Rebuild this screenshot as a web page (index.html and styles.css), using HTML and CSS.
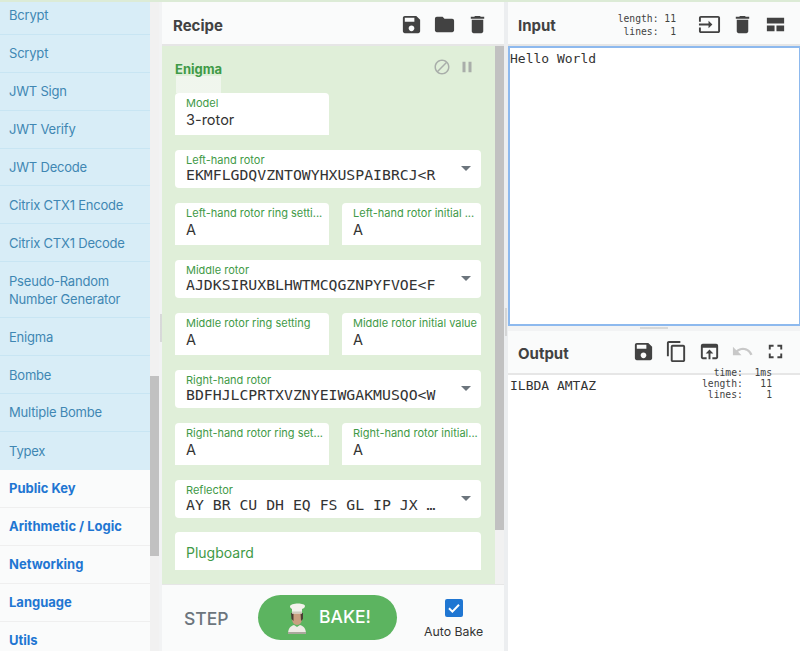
FILE: index.html
```html
<!DOCTYPE html>
<html lang="en">
<head>
<meta charset="utf-8">
<title>CyberChef</title>
<link rel="stylesheet" href="styles.css">
</head>
<body>
<div class="app">
  <aside class="ops">
    <ul class="op-list">
      <li class="op">Bcrypt</li>
      <li class="op">Scrypt</li>
      <li class="op">JWT Sign</li>
      <li class="op">JWT Verify</li>
      <li class="op">JWT Decode</li>
      <li class="op">Citrix CTX1 Encode</li>
      <li class="op">Citrix CTX1 Decode</li>
      <li class="op op-tall">Pseudo-Random Number Generator</li>
      <li class="op">Enigma</li>
      <li class="op">Bombe</li>
      <li class="op">Multiple Bombe</li>
      <li class="op op-last">Typex</li>
      <li class="cat">Public Key</li>
      <li class="cat">Arithmetic / Logic</li>
      <li class="cat">Networking</li>
      <li class="cat">Language</li>
      <li class="cat">Utils</li>
    </ul>
    <div class="scroll-track"><div class="scroll-thumb thumb-ops"></div></div>
  </aside>
  <div class="gutter-v"><span class="grip grip-v grip-ops"></span></div>
  <section class="recipe">
    <header class="head">
      <h2 class="title">Recipe</h2>
      <div class="tools tools-recipe">
        <svg class="ic" viewBox="0 0 24 24"><path d="M17 3H5c-1.110 0-2 .9-2 2v14c0 1.100.89 2 2 2h14c1.100 0 2-.9 2-2V7l-4-4zm-5 16c-1.660 0-3-1.340-3-3s1.340-3 3-3 3 1.340 3 3-1.340 3-3 3zm3-10H5V5h10v4z"/></svg>
        <svg class="ic" viewBox="0 0 24 24"><path d="M10 4H4c-1.100 0-1.990.9-1.990 2L2 18c0 1.100.9 2 2 2h16c1.100 0 2-.9 2-2V8c0-1.100-.9-2-2-2h-8l-2-2z"/></svg>
        <svg class="ic" viewBox="0 0 24 24"><path d="M6 19c0 1.100.9 2 2 2h8c1.100 0 2-.9 2-2V7H6v12zM19 4h-3.500l-1-1h-5l-1 1H5v2h14V4z"/></svg>
      </div>
    </header>
    <div class="recipe-body">
      <div class="enigma">
        <div class="enigma-head">
          <div class="enigma-name">
            <h3 class="enigma-title">Enigma</h3>
            <span class="grip grip-name"></span>
          </div>
          <div class="enigma-tools">
            <svg class="ic-flow" viewBox="0 0 24 24"><path d="M12 2C6.480 2 2 6.480 2 12s4.480 10 10 10 10-4.480 10-10S17.520 2 12 2zM4 12c0-4.420 3.580-8 8-8 1.850 0 3.550.63 4.900 1.690L5.690 16.900C4.630 15.550 4 13.850 4 12zm8 8c-1.850 0-3.550-.63-4.900-1.690L18.310 7.100C19.370 8.450 20 10.150 20 12c0 4.420-3.580 8-8 8z"/></svg>
            <svg class="ic-flow" viewBox="0 0 24 24"><path d="M6 19h4V5H6v14zm8-14v14h4V5h-4z"/></svg>
          </div>
        </div>
        <div class="fields">
          <div class="row row-model">
            <div class="card card-text"><label class="lbl">Model</label><div class="val">3-rotor</div></div>
          </div>
          <div class="card card-sel"><label class="lbl">Left-hand rotor</label><div class="val mono">EKMFLGDQVZNTOWYHXUSPAIBRCJ&lt;R</div><span class="caret"></span></div>
          <div class="row">
            <div class="card card-text"><label class="lbl">Left-hand rotor ring setti...</label><div class="val">A</div></div>
            <div class="card card-text"><label class="lbl">Left-hand rotor initial ...</label><div class="val">A</div></div>
          </div>
          <div class="card card-sel"><label class="lbl">Middle rotor</label><div class="val mono">AJDKSIRUXBLHWTMCQGZNPYFVOE&lt;F</div><span class="caret"></span></div>
          <div class="row">
            <div class="card card-text"><label class="lbl">Middle rotor ring setting</label><div class="val">A</div></div>
            <div class="card card-text"><label class="lbl">Middle rotor initial value</label><div class="val">A</div></div>
          </div>
          <div class="card card-sel"><label class="lbl">Right-hand rotor</label><div class="val mono">BDFHJLCPRTXVZNYEIWGAKMUSQO&lt;W</div><span class="caret"></span></div>
          <div class="row">
            <div class="card card-text"><label class="lbl">Right-hand rotor ring set...</label><div class="val">A</div></div>
            <div class="card card-text"><label class="lbl">Right-hand rotor initial...</label><div class="val">A</div></div>
          </div>
          <div class="card card-sel"><label class="lbl">Reflector</label><div class="val mono">AY BR CU DH EQ FS GL IP JX …</div><span class="caret"></span></div>
          <div class="card card-plug">Plugboard</div>
        </div>
      </div>
      <div class="scroll-track"><div class="scroll-thumb thumb-recipe"></div></div>
    </div>
    <footer class="controls">
      <span class="step">STEP</span>
      <button class="bake" type="button">
        <svg class="chef" viewBox="0 0 24 31">
          <path d="M3 31c0-5 2-8 6-9l3 2 3-2c4 1 6 4 6 9z" fill="#eeece6"/>
          <path d="M3 29h18v2H3z" fill="#a9a89c"/>
          <path d="M7 10h10v6c0 3-2 6-5 6s-5-3-5-6z" fill="#c99f80"/>
          <path d="M6 10h2.500v8l-2-2zM15.500 10H18v6l-2 2z" fill="#4a3d33"/>
          <path d="M5 3.500C5 1.500 9 .5 13 .5s7 1 7 2.500-1.500 2.500-3 3v4.500H7V6C6 5.500 5 4.800 5 3.500z" fill="#f3f2ec"/>
          <path d="M7 8.500h10V10.500H7z" fill="#cfccbf"/>
        </svg>
        <span class="bake-text">BAKE!</span>
      </button>
      <div class="auto">
        <span class="check"><svg viewBox="0 0 18 18"><path d="M4 9.300l3.400 3.300L14 5.800" fill="none" stroke="#fff" stroke-width="2"/></svg></span>
        <span class="auto-label">Auto Bake</span>
      </div>
    </footer>
  </section>
  <div class="gutter-v gutter-io"><span class="grip grip-v grip-io"></span></div>
  <section class="io">
    <div class="input">
      <header class="head">
        <h2 class="title">Input</h2>
        <div class="stats stats-in">length: 11
lines:  1</div>
        <div class="tools tools-in">
          <svg class="ic" viewBox="0 0 24 24"><path d="M21 3.010H3c-1.100 0-2 .9-2 2V9h2V4.990h18v14.030H3V15H1v4.010c0 1.100.9 1.980 2 1.980h18c1.100 0 2-.88 2-1.980v-14c0-1.110-.9-2-2-2zM11 16l4-4-4-4v3H1v2h10v3z"/></svg>
          <svg class="ic" viewBox="0 0 24 24"><path d="M6 19c0 1.100.9 2 2 2h8c1.100 0 2-.9 2-2V7H6v12zM19 4h-3.500l-1-1h-5l-1 1H5v2h14V4z"/></svg>
          <svg class="ic" viewBox="0 0 24 24"><path d="M3 5h18v6H3zM3 13h8v6H3zM13 13h8v6h-8z"/></svg>
        </div>
      </header>
      <div class="input-box">Hello World</div>
    </div>
    <div class="gutter-h"><span class="grip grip-h"></span></div>
    <div class="output">
      <header class="head head-out">
        <h2 class="title">Output</h2>
        <div class="tools tools-out">
          <svg class="ic" viewBox="0 0 24 24"><path d="M17 3H5c-1.110 0-2 .9-2 2v14c0 1.100.89 2 2 2h14c1.100 0 2-.9 2-2V7l-4-4zm-5 16c-1.660 0-3-1.340-3-3s1.340-3 3-3 3 1.340 3 3-1.340 3-3 3zm3-10H5V5h10v4z"/></svg>
          <svg class="ic" viewBox="0 0 24 24"><path d="M16 1H4c-1.100 0-2 .9-2 2v14h2V3h12V1zm3 4H8c-1.100 0-2 .9-2 2v14c0 1.100.9 2 2 2h11c1.100 0 2-.9 2-2V7c0-1.100-.9-2-2-2zm0 16H8V7h11v14z"/></svg>
          <svg class="ic" viewBox="0 0 24 24"><path d="M19 4H5c-1.110 0-2 .9-2 2v12c0 1.100.89 2 2 2h4v-2H5V8h14v10h-4v2h4c1.100 0 2-.9 2-2V6c0-1.100-.89-2-2-2zm-7 6l-4 4h3v6h2v-6h3l-4-4z"/></svg>
          <svg class="ic ic-off" viewBox="0 0 24 24"><path d="M12.500 8c-2.650 0-5.050.99-6.900 2.600L2 7v9h9l-3.620-3.620c1.390-1.160 3.160-1.880 5.120-1.880 3.540 0 6.550 2.310 7.600 5.500l2.370-.78C21.080 11.030 17.150 8 12.500 8z"/></svg>
          <svg class="ic" viewBox="0 0 24 24"><path d="M7 14H5v5h5v-2H7v-3zm-2-4h2V7h3V5H5v5zm12 7h-3v2h5v-5h-2v3zM14 5v2h3v3h2V5h-5z"/></svg>
        </div>
      </header>
      <div class="output-box">
        <span>ILBDA AMTAZ</span>
        <div class="stats stats-out">time:  1ms
length:   11
lines:    1</div>
      </div>
    </div>
  </section>
</div>
</body>
</html>
```
FILE: styles.css
```css
* { box-sizing: border-box; }
html, body { margin: 0; height: 100%; overflow: hidden; }
body { font-family: Inter, "Liberation Sans", sans-serif; color: #333; background: #fff; }

.app {
  display: flex;
  height: 651px;
  border-top: 2px solid #dcebd6;
  background: #f2f3f4;
}

/* operations column */
.ops { width: 159px; display: flex; overflow: hidden; flex: none; background: #fafbfb; }
.op-list { list-style: none; margin: -5px 0 0; padding: 0; width: 150px; flex: none; }
.op {
  height: 37.900px;
  padding: 0 9px;
  display: flex;
  align-items: center;
  font-size: 13px;
  letter-spacing: -0.2px;
  color: #3f87b3;
  background: #d8edf7;
  border-bottom: 1px solid #c8e5f3;
}
.op-tall { height: 56px; line-height: 18px; }
.op-last { border-bottom: 0; }
.cat {
  height: 38px;
  padding: 0 9px 1px;
  display: flex;
  align-items: center;
  font-size: 13px;
  font-weight: 700;
  color: #1f76d2;
  background: #fafbfb;
  border-bottom: 1px solid #efefef;
}
.scroll-track { width: 9px; flex: none; background: #f1f1f1; display: flex; flex-direction: column; }
.scroll-thumb { background: #c1c1c1; width: 100%; }
.thumb-ops { height: 180px; margin-top: 374px; }
.thumb-recipe { height: 484px; }

/* gutters */
.gutter-v { width: 3px; flex: none; display: flex; align-items: flex-start; justify-content: center; background: #f2f3f4; }
.gutter-io { width: 4px; background: #eceef0; }
.grip { display: block; background-image: radial-gradient(#b9b9b9 0.6px, transparent 0.8px); background-size: 2px 2px; }
.grip-v { width: 2px; height: 28px; }
.grip-ops { margin-top: 312px; }
.grip-io { margin-top: 306px; }
.gutter-h { height: 5px; flex: none; display: flex; justify-content: center; background: #f2f3f4; }
.grip-h { width: 28px; height: 2px; margin-top: 1px; }
.grip-name { width: 45px; height: 17px; margin: -1px 0 0 1px; background-image: radial-gradient(#f1f7ee 0.7px, transparent 0.9px); }

/* shared header */
.head {
  height: 44px;
  flex: none;
  display: flex;
  align-items: center;
  background: #fafbfb;
  border-bottom: 2px solid #e6e6e6;
  padding: 5px 0 0 11px;
}
.title { margin: 0; font-size: 15px; font-weight: 700; color: #424242; }
.tools { display: flex; margin-left: auto; gap: 10px; }
.ic { width: 23px; height: 23px; fill: #424242; display: block; flex: none; }
.ic-off { fill: #c8c8c8; }

/* recipe */
.recipe { width: 342px; flex: none; display: flex; flex-direction: column; height: 649px; }
.tools-recipe { padding-right: 15px; margin-top: -3px; }
.recipe-body { height: 538px; flex: none; display: flex; overflow: hidden; }
.enigma { flex: 1; min-width: 0; background: #e0efd9; padding: 0 14px 0 13px; }
.enigma-head { height: 47px; display: flex; align-items: flex-start; justify-content: space-between; overflow: hidden; }
.enigma-title { margin: 15px 0 0; font-size: 13px; line-height: 16px; font-weight: 700; color: #3f9a47; }
.enigma-tools { display: flex; gap: 7px; margin-top: 12px; padding-right: 5px; }
.ic-flow { width: 18px; height: 18px; fill: #a9aeaa; display: block; }
.fields { display: flex; flex-direction: column; gap: 15px; }
.row { display: grid; grid-template-columns: 154px 139px; column-gap: 13px; }
.row-model { grid-template-columns: 154px; }
.card {
  position: relative;
  background: #fff;
  border-radius: 4px 4px 0 0;
  padding: 0 11px;
  color: #333;
}
.card-text { height: 42px; padding-right: 0; }
.card-sel { height: 38px; border-radius: 4px; }
.card-plug { height: 38px; display: flex; align-items: center; padding-top: 2px; font-size: 14px; color: #3f9a47; border-radius: 4px 4px 0 0; margin-top: -1px; }
.lbl { display: block; font-size: 11px; line-height: 13px; padding-top: 4px; color: #3f9a47; white-space: nowrap; }
.val { font-size: 14.500px; line-height: 18px; margin-top: 1px; white-space: nowrap; color: #333; }
.mono { font-family: "DejaVu Sans Mono", "Liberation Mono", monospace; font-size: 14.800px; line-height: 15px; margin-top: 0; white-space: pre; }
.caret {
  position: absolute;
  right: 10px;
  top: 16px;
  width: 0; height: 0;
  border-left: 5px solid transparent;
  border-right: 5px solid transparent;
  border-top: 5px solid #6c757d;
}

/* recipe footer */
.controls {
  flex: 1;
  display: flex;
  align-items: center;
  background: #fafbfb;
  border-top: 1px solid #e6e6e6;
  padding-left: 22px;
}
.step { font-size: 17.500px; font-weight: 500; color: #6c757d; margin-top: 0; width: 74px; }
.bake {
  width: 139px;
  height: 45px;
  margin-top: -2px;
  border: 0;
  border-radius: 23px;
  background: #5cb460;
  color: #fff;
  font: 500 17.500px Inter, "Liberation Sans", sans-serif;
  display: flex;
  align-items: center;
  gap: 10px;
  padding: 0 0 0 27px;
}
.bake-text { margin-top: -2px; }
.chef { width: 24px; height: 31px; flex: none; margin-top: 2px; }
.auto { display: flex; flex-direction: column; align-items: center; margin-left: 27px; gap: 8px; margin-top: 1px; }
.check { width: 18px; height: 18px; border-radius: 2px; background: #1f76d2; display: block; }
.check svg { width: 18px; height: 18px; display: block; }
.auto-label { font-size: 12.300px; line-height: 14px; color: #333; }

/* input / output */
.io { flex: 1; min-width: 0; display: flex; flex-direction: column; height: 649px; background: #fff; }
.io .head { padding-left: 10px; }
.stats { font-family: "DejaVu Sans Mono", "Liberation Mono", monospace; font-size: 9.700px; color: #424242; white-space: pre; text-align: right; }
.stats-in { margin-left: auto; line-height: 13px; margin-top: -1px; }
.tools-in { margin: -3px 0 0 22px; padding-right: 13px; }
.input { height: 324px; flex: none; display: flex; flex-direction: column; }
.input-box {
  flex: 1;
  border: 2px solid #8db9ee;
  border-right-width: 1px;
  padding: 3px 0;
  font: 13px/16px "DejaVu Sans Mono", "Liberation Mono", monospace;
  color: #333;
}
.output { flex: 1; display: flex; flex-direction: column; }
.io .head-out { height: 44px; background: #fafbfb; padding-top: 2px; }
.tools-out { padding-right: 13px; margin-top: -4px; }
.output-box { position: relative; padding: 3px 2px; font: 13px/16px "DejaVu Sans Mono", "Liberation Mono", monospace; color: #333; flex: 1; }
.stats-out { position: absolute; top: -8px; right: 28px; font-size: 9.700px; line-height: 11px; }
```
